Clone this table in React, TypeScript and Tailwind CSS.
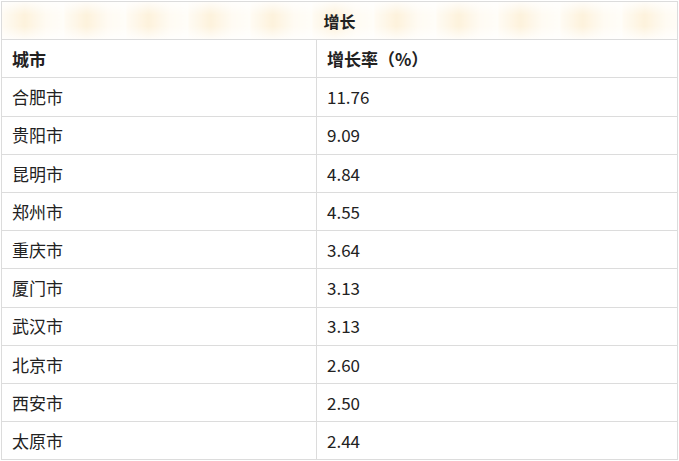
const rows: [string, string][] = [
  ["合肥市", "11.76"],
  ["贵阳市", "9.09"],
  ["昆明市", "4.84"],
  ["郑州市", "4.55"],
  ["重庆市", "3.64"],
  ["厦门市", "3.13"],
  ["武汉市", "3.13"],
  ["北京市", "2.60"],
  ["西安市", "2.50"],
  ["太原市", "2.44"],
];

const App = () => {
  return (
    <div className="w-[679px] h-[461px] bg-white pl-px pt-px font-['Noto_Sans_CJK_SC','Noto_Sans',sans-serif] text-[17px] text-[#222]">
      <table className="w-[677px] border-collapse">
        <thead>
          <tr className="h-[38.2px]">
            <th
              colSpan={2}
              className="border border-[#dcdcdc] text-center font-bold text-[16px] bg-[repeating-linear-gradient(90deg,#fffbf3_0px,#fdf2dc_22px,#fffbf3_44px,#fffdf8_62px)]"
            >
              <div className="bg-[linear-gradient(180deg,rgba(255,255,255,0.8)_0%,rgba(255,255,255,0)_35%,rgba(255,255,255,0)_65%,rgba(255,255,255,0.8)_100%)] h-[37px] flex items-center justify-center">
                增长
              </div>
            </th>
          </tr>
          <tr className="h-[38.2px]">
            <th className="w-[315px] border border-[#dcdcdc] text-left font-bold px-[10px]">城市</th>
            <th className="border border-[#dcdcdc] text-left font-bold px-[10px]">增长率（%）</th>
          </tr>
        </thead>
        <tbody>
          {rows.map(([city, value]) => (
            <tr key={city} className="h-[38.2px]">
              <td className="border border-[#dcdcdc] px-[10px]">{city}</td>
              <td className="border border-[#dcdcdc] px-[10px]">{value}</td>
            </tr>
          ))}
        </tbody>
      </table>
    </div>
  );
};

export default App;
